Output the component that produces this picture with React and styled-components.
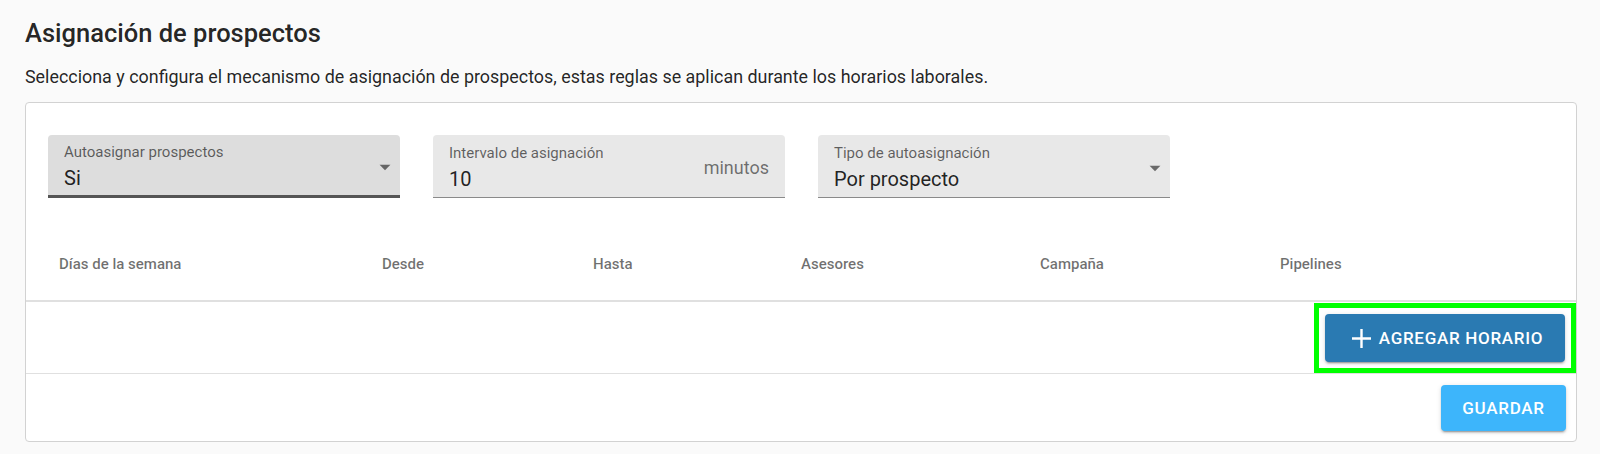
import React from "react";
import styled, { createGlobalStyle } from "styled-components";

const Global = createGlobalStyle`
  html, body { margin: 0; padding: 0; background: #fafafa; }
  body { font-family: Roboto, "Noto Sans", sans-serif; color: rgba(0,0,0,0.87); }
  * { box-sizing: border-box; }
`;

const Page = styled.div`
  padding: 0 23px 0 25px;
  width: 1600px;
  height: 454px;
  overflow: hidden;
`;

const Title = styled.h2`
  margin: 0;
  padding-top: 18px;
  font-size: 25.5px;
  line-height: 30px;
  font-weight: 500;
  color: rgba(0,0,0,0.87);
`;

const Subtitle = styled.p`
  margin: 0;
  padding-top: 17px;
  font-size: 17.9px;
  line-height: 24px;
  font-weight: 400;
  color: rgba(0,0,0,0.87);
`;

const Card = styled.div`
  margin-top: 13px;
  background: #fff;
  border: 1px solid #d2d2d2;
  border-radius: 4px;
  overflow: hidden;
`;

const FieldsRow = styled.div`
  display: flex;
  gap: 33px;
  padding: 32px 22px 0 22px;
`;

const Field = styled.div`
  position: relative;
  width: 352px;
  height: 63px;
  border-radius: 4px 4px 0 0;
  background: ${(p) => (p.$active ? "#dddddd" : "#e8e8e8")};
  border-bottom: ${(p) => (p.$active ? "3px solid #555" : "1px solid #8a8a8a")};
  padding: 8px 16px 0 16px;
  display: flex;
  align-items: center;
`;

const FieldBody = styled.div`
  flex: 1;
  display: flex;
  flex-direction: column;
`;

const Label = styled.span`
  font-size: 15px;
  line-height: 18px;
  color: rgba(0,0,0,0.6);
  margin-top: -4px;
`;

const Value = styled.span`
  font-size: 20px;
  line-height: 26px;
  color: rgba(0,0,0,0.87);
  margin-top: 4px;
`;

const Adornment = styled.span`
  font-size: 18px;
  color: rgba(0,0,0,0.54);
  margin-top: -5px;
`;

const Caret = styled.svg`
  width: 26px;
  height: 26px;
  margin-right: -14px;
  margin-top: -4px;
  fill: rgba(0,0,0,0.54);
`;

const HeaderRow = styled.div`
  margin-top: 30px;
  height: 74px;
  display: grid;
  grid-template-columns: 323px 211px 208px 239px 240px 1fr;
  align-items: center;
  padding-left: 33px;
  border-bottom: 2px solid #e0e0e0;
`;

const HeadCell = styled.div`
  font-size: 15px;
  font-weight: 500;
  color: rgba(0,0,0,0.56);
`;

const BodyRow = styled.div`
  display: flex;
  justify-content: flex-end;
  padding-top: 1px;
  border-bottom: 1px solid #e0e0e0;
`;

const Highlight = styled.div`
  border: 5px solid #00ff00;
  padding: 6px;
`;

const Button = styled.button`
  display: inline-flex;
  align-items: center;
  justify-content: center;
  gap: 8px;
  width: ${(p) => p.$w}px;
  height: ${(p) => p.$h}px;
  border: none;
  border-radius: 4px;
  background: ${(p) => p.$bg};
  color: #fff;
  font-family: Roboto, sans-serif;
  font-size: 17px;
  font-weight: 500;
  letter-spacing: 0.7px;
  text-transform: uppercase;
  box-shadow: 0 3px 1px -2px rgba(0,0,0,0.2), 0 2px 2px 0 rgba(0,0,0,0.14), 0 1px 5px 0 rgba(0,0,0,0.12);
  padding: 0 0 0 ${(p) => p.$shift || 0}px;
  cursor: pointer;
`;

const PlusIcon = styled.svg`
  width: 19px;
  height: 19px;
  flex: none;
`;

const Footer = styled.div`
  display: flex;
  justify-content: flex-end;
  padding: 11px 10px 10px 0;
`;

const ArrowDown = () => (
  <Caret viewBox="0 0 24 24">
    <path d="M7 10l5 5 5-5z" />
  </Caret>
);

export default function App() {
  const headers = ["Días de la semana", "Desde", "Hasta", "Asesores", "Campaña", "Pipelines"];
  return (
    <>
      <Global />
      <Page>
        <Title>Asignación de prospectos</Title>
        <Subtitle>
          Selecciona y configura el mecanismo de asignación de prospectos, estas reglas se aplican durante los horarios laborales.
        </Subtitle>
        <Card>
          <FieldsRow>
            <Field $active>
              <FieldBody>
                <Label>Autoasignar prospectos</Label>
                <Value>Si</Value>
              </FieldBody>
              <ArrowDown />
            </Field>
            <Field>
              <FieldBody>
                <Label>Intervalo de asignación</Label>
                <Value>10</Value>
              </FieldBody>
              <Adornment>minutos</Adornment>
            </Field>
            <Field>
              <FieldBody>
                <Label>Tipo de autoasignación</Label>
                <Value>Por prospecto</Value>
              </FieldBody>
              <ArrowDown />
            </Field>
          </FieldsRow>
          <HeaderRow>
            {headers.map((h) => (
              <HeadCell key={h}>{h}</HeadCell>
            ))}
          </HeaderRow>
          <BodyRow>
            <Highlight>
              <Button $w={240} $h={48} $bg="#2a7ab2" $shift={5}>
                <PlusIcon viewBox="0 0 19 19">
                  <path d="M9.5 0v19M0 9.5h19" stroke="#fff" strokeWidth="2.4" />
                </PlusIcon>
                Agregar horario
              </Button>
            </Highlight>
          </BodyRow>
          <Footer>
            <Button $w={125} $h={46} $bg="#3db5fb">Guardar</Button>
          </Footer>
        </Card>
      </Page>
    </>
  );
}
